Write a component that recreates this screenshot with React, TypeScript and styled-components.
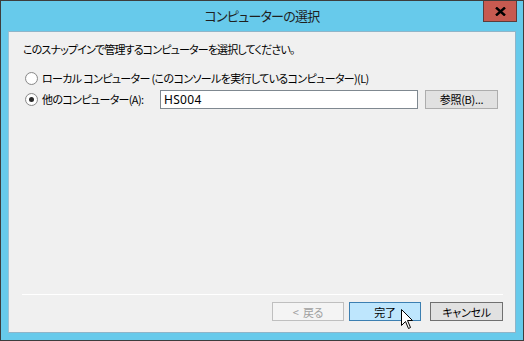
import React from 'react';
import styled, { createGlobalStyle } from 'styled-components';

const Global = createGlobalStyle`
  html, body {
    margin: 0;
    padding: 0;
    background: #ffffff;
  }
  * {
    box-sizing: border-box;
  }
`;

const FONT = `"Noto Sans CJK JP", "Noto Sans", sans-serif`;

const Window = styled.div`
  position: relative;
  width: 524px;
  height: 341px;
  border: 1px solid #3d3d3d;
  background: #67caeb;
  display: flex;
  flex-direction: column;
  padding: 0 7px 7px 7px;
  font-family: ${FONT};
  font-feature-settings: 'palt';
  color: #000;
`;

const TitleBar = styled.div`
  height: 30px;
  display: grid;
  grid-template-columns: 1fr auto 1fr;
  align-items: start;
`;

const Title = styled.div`
  grid-column: 2;
  font-size: 13px;
  line-height: 30px;
  color: #1f1f1f;
  letter-spacing: -0.75px;
`;

const CloseButton = styled.div`
  grid-column: 3;
  justify-self: end;
  margin-right: -1px;
  width: 34px;
  height: 21px;
  background: #c75a50;
  border: 1px solid #5c3c3a;
  border-top: none;
  display: flex;
  align-items: center;
  justify-content: center;
`;

const Client = styled.div`
  flex: 1;
  background: #f0f0f0;
  border: 1px solid #8fb5c9;
  border-left-color: #9cc3d6;
  display: flex;
  flex-direction: column;
  padding: 0 12px 11px 13px;
`;

const Description = styled.div`
  font-size: 11px;
  line-height: 16px;
  margin-top: 9px;
  margin-left: 1px;
  letter-spacing: -0.85px;
`;

const Options = styled.div`
  margin-top: 12px;
  display: flex;
  flex-direction: column;
  gap: 3px;
`;

const OptionRow = styled.div`
  height: 18px;
  display: flex;
  align-items: center;
  font-size: 11px;
  letter-spacing: -0.65px;
`;

const Radio = styled.span<{ $checked?: boolean }>`
  width: 13px;
  height: 13px;
  border-radius: 50%;
  border: 1px solid #8a8a8a;
  background: radial-gradient(circle, #ffffff 55%, #eaeaea 100%);
  margin-left: 3px;
  margin-right: 4px;
  flex: none;
  display: flex;
  align-items: center;
  justify-content: center;
  &::after {
    content: '';
    display: ${(p) => (p.$checked ? 'block' : 'none')};
    width: 5px;
    height: 5px;
    border-radius: 50%;
    background: #2a2a2a;
  }
`;

const OptionLabel = styled.span<{ $width?: number }>`
  width: ${(p) => (p.$width ? `${p.$width}px` : 'auto')};
  flex: none;
  white-space: nowrap;
`;

const TextBox = styled.div`
  width: 258px;
  height: 19px;
  border: 1px solid #7f8890;
  background: #ffffff;
  padding-left: 3px;
  font-size: 12px;
  line-height: 17px;
  font-family: "Noto Sans", ${FONT};
  letter-spacing: 0.3px;
`;

const PushButton = styled.div<{ $variant?: 'normal' | 'hot' | 'disabled'; $width?: number }>`
  height: 19px;
  width: ${(p) => p.$width ?? 73}px;
  display: flex;
  align-items: center;
  justify-content: center;
  font-size: 11px;
  letter-spacing: -0.3px;
  white-space: pre;
  border: 1px solid
    ${(p) =>
      p.$variant === 'hot' ? '#3c7fb1' : p.$variant === 'disabled' ? '#bfbfbf' : '#707070'};
  background: ${(p) =>
    p.$variant === 'hot' ? '#bee6fd' : p.$variant === 'disabled' ? '#f4f4f4' : '#e1e1e1'};
  color: ${(p) => (p.$variant === 'disabled' ? '#a0a0a0' : '#000')};
`;

const BrowseButton = styled(PushButton)`
  margin-left: 7px;
  border-color: #adadad;
`;

const Spacer = styled.div`
  flex: 1;
`;

const Separator = styled.div`
  height: 1px;
  background: #ffffff;
  margin-bottom: 7px;
`;

const ButtonRow = styled.div`
  display: flex;
  justify-content: flex-end;
  gap: 5px;
`;

const CancelWrap = styled.div`
  margin-left: 4px;
`;

const Cursor = styled.svg`
  position: absolute;
  left: 400px;
  top: 308px;
  pointer-events: none;
`;

export default function App() {
  return (
    <>
      <Global />
      <Window>
        <TitleBar>
          <Title>コンピューターの選択</Title>
          <CloseButton>
            <svg width="11" height="9" viewBox="0 0 11 9">
              <path d="M1 0.5 L10 8.5 M10 0.5 L1 8.5" stroke="#000" strokeWidth="2.4" />
            </svg>
          </CloseButton>
        </TitleBar>
        <Client>
          <Description>このスナップインで管理するコンピューターを選択してください。</Description>
          <Options>
            <OptionRow>
              <Radio />
              <OptionLabel>ローカル コンピューター (このコンソールを実行しているコンピューター)(L)</OptionLabel>
            </OptionRow>
            <OptionRow>
              <Radio $checked />
              <OptionLabel $width={118}>他のコンピューター(A):</OptionLabel>
              <TextBox>HS004</TextBox>
              <BrowseButton>参照(B)...</BrowseButton>
            </OptionRow>
          </Options>
          <Spacer />
          <Separator />
          <ButtonRow>
            <PushButton $variant="disabled" $width={72}>{'<  戻る'}</PushButton>
            <PushButton $variant="hot" $width={72}>完了</PushButton>
            <CancelWrap>
              <PushButton>キャンセル</PushButton>
            </CancelWrap>
          </ButtonRow>
        </Client>
        <Cursor width="13" height="21" viewBox="0 0 13 21">
          <path
            d="M0.5 0.5 L0.5 16.5 L4.5 12.5 L7.5 19.5 L9.5 18.5 L6.5 11.5 L11.5 11.5 Z"
            fill="#fff"
            stroke="#000"
            strokeWidth="1"
            strokeLinejoin="miter"
          />
        </Cursor>
      </Window>
    </>
  );
}
